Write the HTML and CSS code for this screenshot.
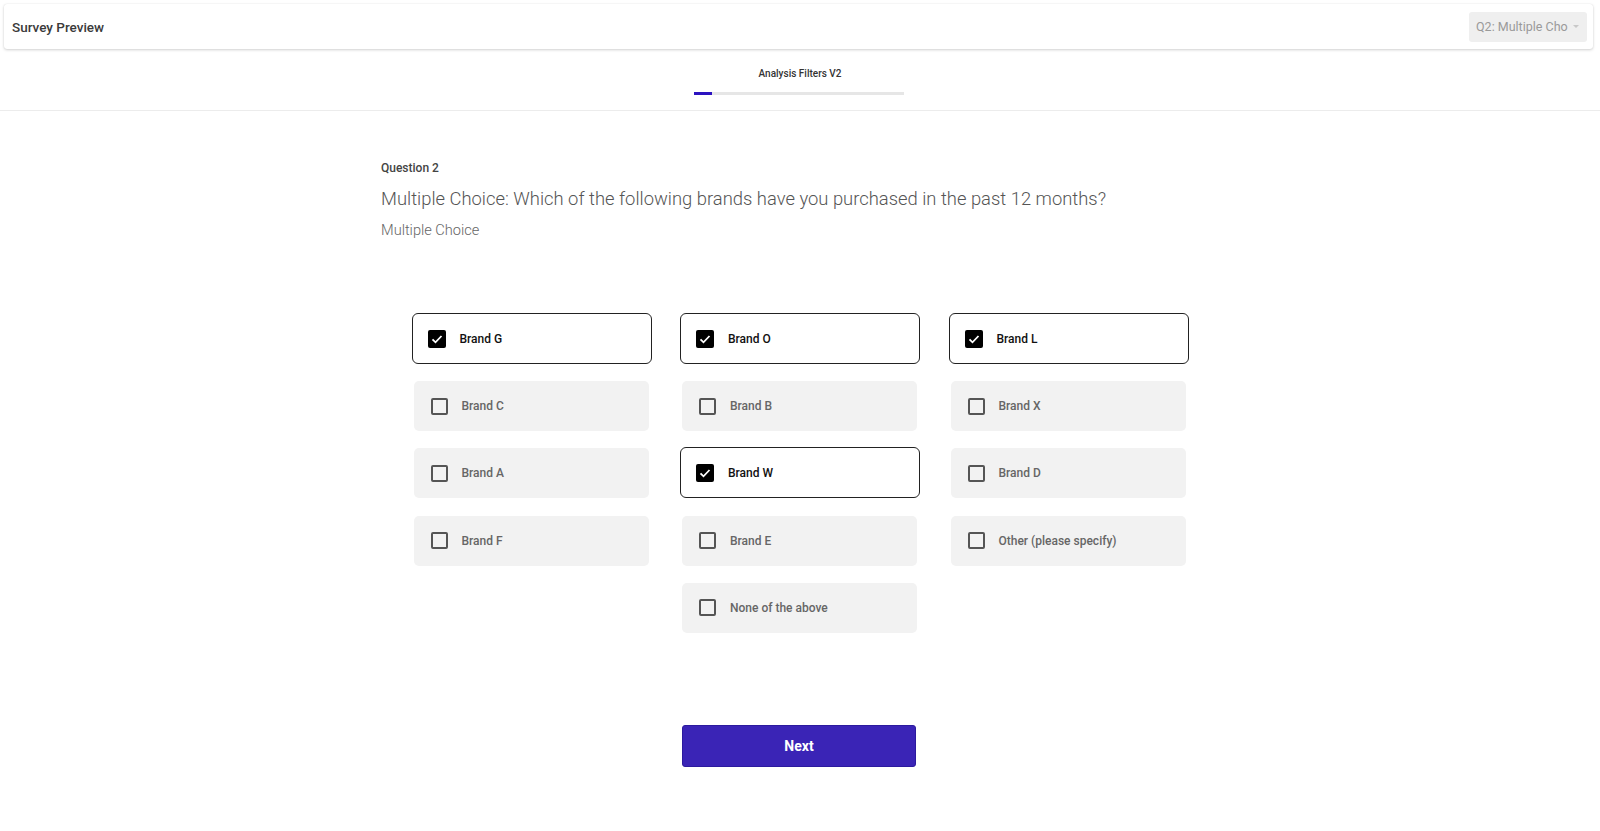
FILE: index.html
```html
<!DOCTYPE html>
<html>
<head>
<meta charset="utf-8">
<link rel="stylesheet" href="styles.css">
</head>
<body>
<header class="topbar">
  <div class="title">Survey Preview</div>
  <div class="select"><span class="select-text">Q2: Multiple Choice</span><span class="caret"></span></div>
</header>
<section class="progress">
  <div class="progress-title">Analysis Filters V2</div>
  <div class="bar"><div class="bar-fill"></div></div>
</section>
<main class="main">
  <div class="qlabel">Question 2</div>
  <div class="qtext">Multiple Choice: Which of the following brands have you purchased in the past 12 months?</div>
  <div class="qtype">Multiple Choice</div>
  <div class="grid">
    <div class="opt sel"><span class="cb"><svg viewBox="0 0 18 18" width="18" height="18"><path d="M4.5 9.3l3 3 6-6.3" fill="none" stroke="#fff" stroke-width="1.8"/></svg></span><span class="lbl">Brand G</span></div>
    <div class="opt sel"><span class="cb"><svg viewBox="0 0 18 18" width="18" height="18"><path d="M4.5 9.3l3 3 6-6.3" fill="none" stroke="#fff" stroke-width="1.8"/></svg></span><span class="lbl">Brand O</span></div>
    <div class="opt sel"><span class="cb"><svg viewBox="0 0 18 18" width="18" height="18"><path d="M4.5 9.3l3 3 6-6.3" fill="none" stroke="#fff" stroke-width="1.8"/></svg></span><span class="lbl">Brand L</span></div>
    <div class="opt"><span class="cb"></span><span class="lbl">Brand C</span></div>
    <div class="opt"><span class="cb"></span><span class="lbl">Brand B</span></div>
    <div class="opt"><span class="cb"></span><span class="lbl">Brand X</span></div>
    <div class="opt"><span class="cb"></span><span class="lbl">Brand A</span></div>
    <div class="opt sel"><span class="cb"><svg viewBox="0 0 18 18" width="18" height="18"><path d="M4.5 9.3l3 3 6-6.3" fill="none" stroke="#fff" stroke-width="1.8"/></svg></span><span class="lbl">Brand W</span></div>
    <div class="opt"><span class="cb"></span><span class="lbl">Brand D</span></div>
    <div class="opt"><span class="cb"></span><span class="lbl">Brand F</span></div>
    <div class="opt"><span class="cb"></span><span class="lbl">Brand E</span></div>
    <div class="opt"><span class="cb"></span><span class="lbl">Other (please specify)</span></div>
    <div class="opt col2"><span class="cb"></span><span class="lbl">None of the above</span></div>
  </div>
  <div class="actions"><button class="next">Next</button></div>
</main>
</body>
</html>
```
FILE: styles.css
```css
* { box-sizing: border-box; }
html, body { margin: 0; padding: 0; background: #fff; }
body { font-family: Roboto, "Noto Sans", "Liberation Sans", sans-serif; color: #333; }

.topbar {
  margin: 4px 7px 0 4px;
  height: 45px;
  background: #fff;
  border-radius: 3px;
  box-shadow: 0 1px 3px rgba(0,0,0,0.18), 0 0 1px rgba(0,0,0,0.12);
  display: flex;
  align-items: center;
  justify-content: space-between;
  padding: 0 6px 0 8px;
}
.title { font-size: 13.5px; font-weight: 500; color: #3a3a3a; }
.select {
  width: 118px;
  height: 30px;
  background: #efefef;
  border-radius: 3px;
  display: flex;
  align-items: center;
  padding: 0 6px 0 7px;
  gap: 3px;
}
.select-text {
  font-size: 12.5px;
  color: #9a9a9a;
  white-space: nowrap;
  overflow: hidden;
  width: 92px;
  flex: none;
}
.caret {
  width: 0; height: 0;
  border-left: 3px solid transparent;
  border-right: 3px solid transparent;
  border-top: 3px solid #c8c8c8;
  margin-left: 2px;
}

.progress {
  height: 62px;
  border-bottom: 1px solid #ececec;
  display: flex;
  flex-direction: column;
  align-items: center;
  padding-top: 18px;
}
.progress-title { font-size: 10px; font-weight: 500; color: #333; line-height: 13px; }
.bar {
  margin-top: 12px;
  width: 210px;
  height: 3px;
  background: #e6e6e6;
  margin-left: -2px;
}
.bar-fill { width: 18px; height: 3px; background: #2c13c0; }

.main {
  width: 838px;
  margin: 0 auto;
  padding-top: 49px;
}
.qlabel { font-size: 12px; font-weight: 500; color: #444; line-height: 16px; }
.qtext { margin-top: 11px; font-size: 18.4px; font-weight: 300; color: #555; line-height: 24px; }
.qtype { margin-top: 9px; font-size: 14.6px; font-weight: 300; color: #666; line-height: 20px; }

.grid {
  margin: 73px auto 0;
  width: 777px;
  display: grid;
  grid-template-columns: repeat(3, 240px);
  grid-auto-rows: 51px;
  column-gap: 28.5px;
  row-gap: 16.2px;
}
.opt {
  display: flex;
  align-items: center;
  background: #f2f2f2;
  border-radius: 5px;
  margin: 1px 3px 0 2px;
  padding-left: 17px;
  font-size: 12px;
  font-weight: 500;
  color: #666;
}
.opt.col2 { grid-column: 2; }
.opt.sel {
  margin: 0;
  background: #fff;
  border: 1.5px solid #222;
  border-radius: 6px;
  padding-left: 15px;
  color: #111;
}
.cb {
  width: 17px;
  height: 17px;
  border: 2px solid #555;
  border-radius: 2px;
  flex: none;
}
.sel .cb {
  width: 18px;
  height: 18px;
  border: none;
  background: #000;
  display: block;
}
.sel .cb svg { display: block; }
.lbl { margin-left: 14px; }

.actions { display: flex; justify-content: center; margin-top: 92px; margin-left: -2px; }
.next {
  width: 234px;
  height: 42px;
  background: #3a24b6;
  border: 1px solid #2c1a9e;
  border-radius: 3px;
  color: #fff;
  font-family: Roboto, "Noto Sans", sans-serif;
  font-size: 14px;
  font-weight: 700;
}
```
